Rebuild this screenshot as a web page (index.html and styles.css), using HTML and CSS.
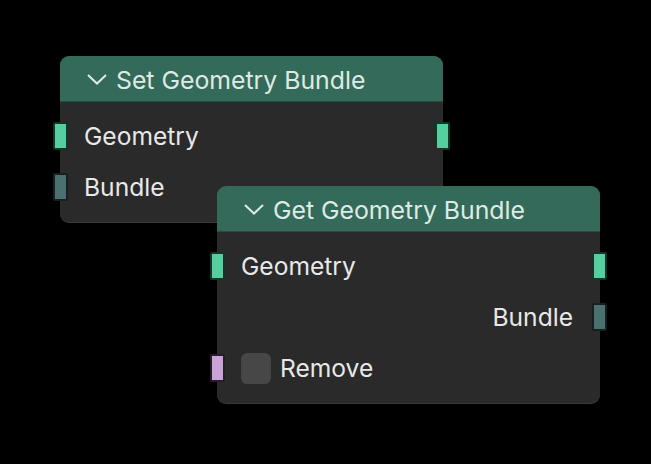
FILE: index.html
```html
<!DOCTYPE html>
<html lang="en">
  <head>
    <meta charset="UTF-8" />
    <title>Node Editor</title>
    <link rel="stylesheet" href="styles.css">
  </head>
  <body>
    <div class="canvas">
      <div class="node node-set">
        <div class="node-header">
          <svg class="chevron" width="22" height="12" viewBox="0 0 22 12">
            <path d="M2 2 L11 10.5 L20 2" fill="none" stroke="currentColor" stroke-width="2" />
          </svg>
          <span>Set Geometry Bundle</span>
        </div>
        <div class="node-body">
          <div class="row">
            <span class="socket in geometry"></span>
            <span class="label">Geometry</span>
            <span class="socket out geometry"></span>
          </div>
          <div class="row">
            <span class="socket in bundle"></span>
            <span class="label">Bundle</span>
          </div>
        </div>
      </div>

      <div class="node node-get">
        <div class="node-header">
          <svg class="chevron" width="22" height="12" viewBox="0 0 22 12">
            <path d="M2 2 L11 10.5 L20 2" fill="none" stroke="currentColor" stroke-width="2" />
          </svg>
          <span>Get Geometry Bundle</span>
        </div>
        <div class="node-body">
          <div class="row">
            <span class="socket in geometry"></span>
            <span class="label">Geometry</span>
            <span class="socket out geometry"></span>
          </div>
          <div class="row row-out">
            <span class="label">Bundle</span>
            <span class="socket out bundle"></span>
          </div>
          <div class="row">
            <span class="socket in boolean"></span>
            <span class="checkbox"></span>
            <span class="label">Remove</span>
          </div>
        </div>
      </div>
    </div>
  </body>
</html>
```

FILE: styles.css
```css
* {
  box-sizing: border-box;
  margin: 0;
  padding: 0;
}

body {
  font-family: Inter, "Noto Sans", sans-serif;
  background-color: #000000;
  color: #e8e8e8;
}

.canvas {
  position: relative;
  width: 651px;
  height: 464px;
  overflow: hidden;
}

/* nodes sit freely on the editor canvas */
.node {
  position: absolute;
  width: 383px;
  background-color: #2a2a2a;
  border-radius: 9px;
  box-shadow: 0 1px 0 #3a3a3a;
}

.node-set {
  left: 60px;
  top: 56px;
}

.node-get {
  left: 217px;
  top: 186px;
}

.node-header {
  height: 46px;
  display: flex;
  align-items: center;
  gap: 8px;
  padding: 2px 0 0 26px;
  background-color: #336a59;
  border-radius: 9px 9px 0 0;
  border-bottom: 1px solid #264e42;
  color: #dfeae4;
  font-size: 24.8px;
}

.chevron {
  color: #dfeae4;
  margin-top: -2px;
}

.node-body {
  padding: 8px 0 10px;
}

.row {
  position: relative;
  height: 51px;
  display: flex;
  align-items: center;
  gap: 9px;
  padding: 1px 24px 0;
  font-size: 24.6px;
}

.row-out {
  justify-content: flex-end;
  padding-right: 27px;
}

.socket {
  position: absolute;
  top: 50%;
  width: 15px;
  height: 28px;
  margin-top: -14px;
  border: 2px solid #141a18;
  border-radius: 2px;
}

.socket.in {
  left: -7px;
}

.socket.out {
  right: -7px;
}

.geometry {
  background-color: #55cf9f;
  border-color: #153528;
}

.bundle {
  background-color: #4a7170;
  border-color: #17201f;
}

.boolean {
  background-color: #c9a2d7;
  border-color: #261c2a;
}

.checkbox {
  width: 30px;
  height: 31px;
  border-radius: 6px;
  background-color: #474747;
}
```
